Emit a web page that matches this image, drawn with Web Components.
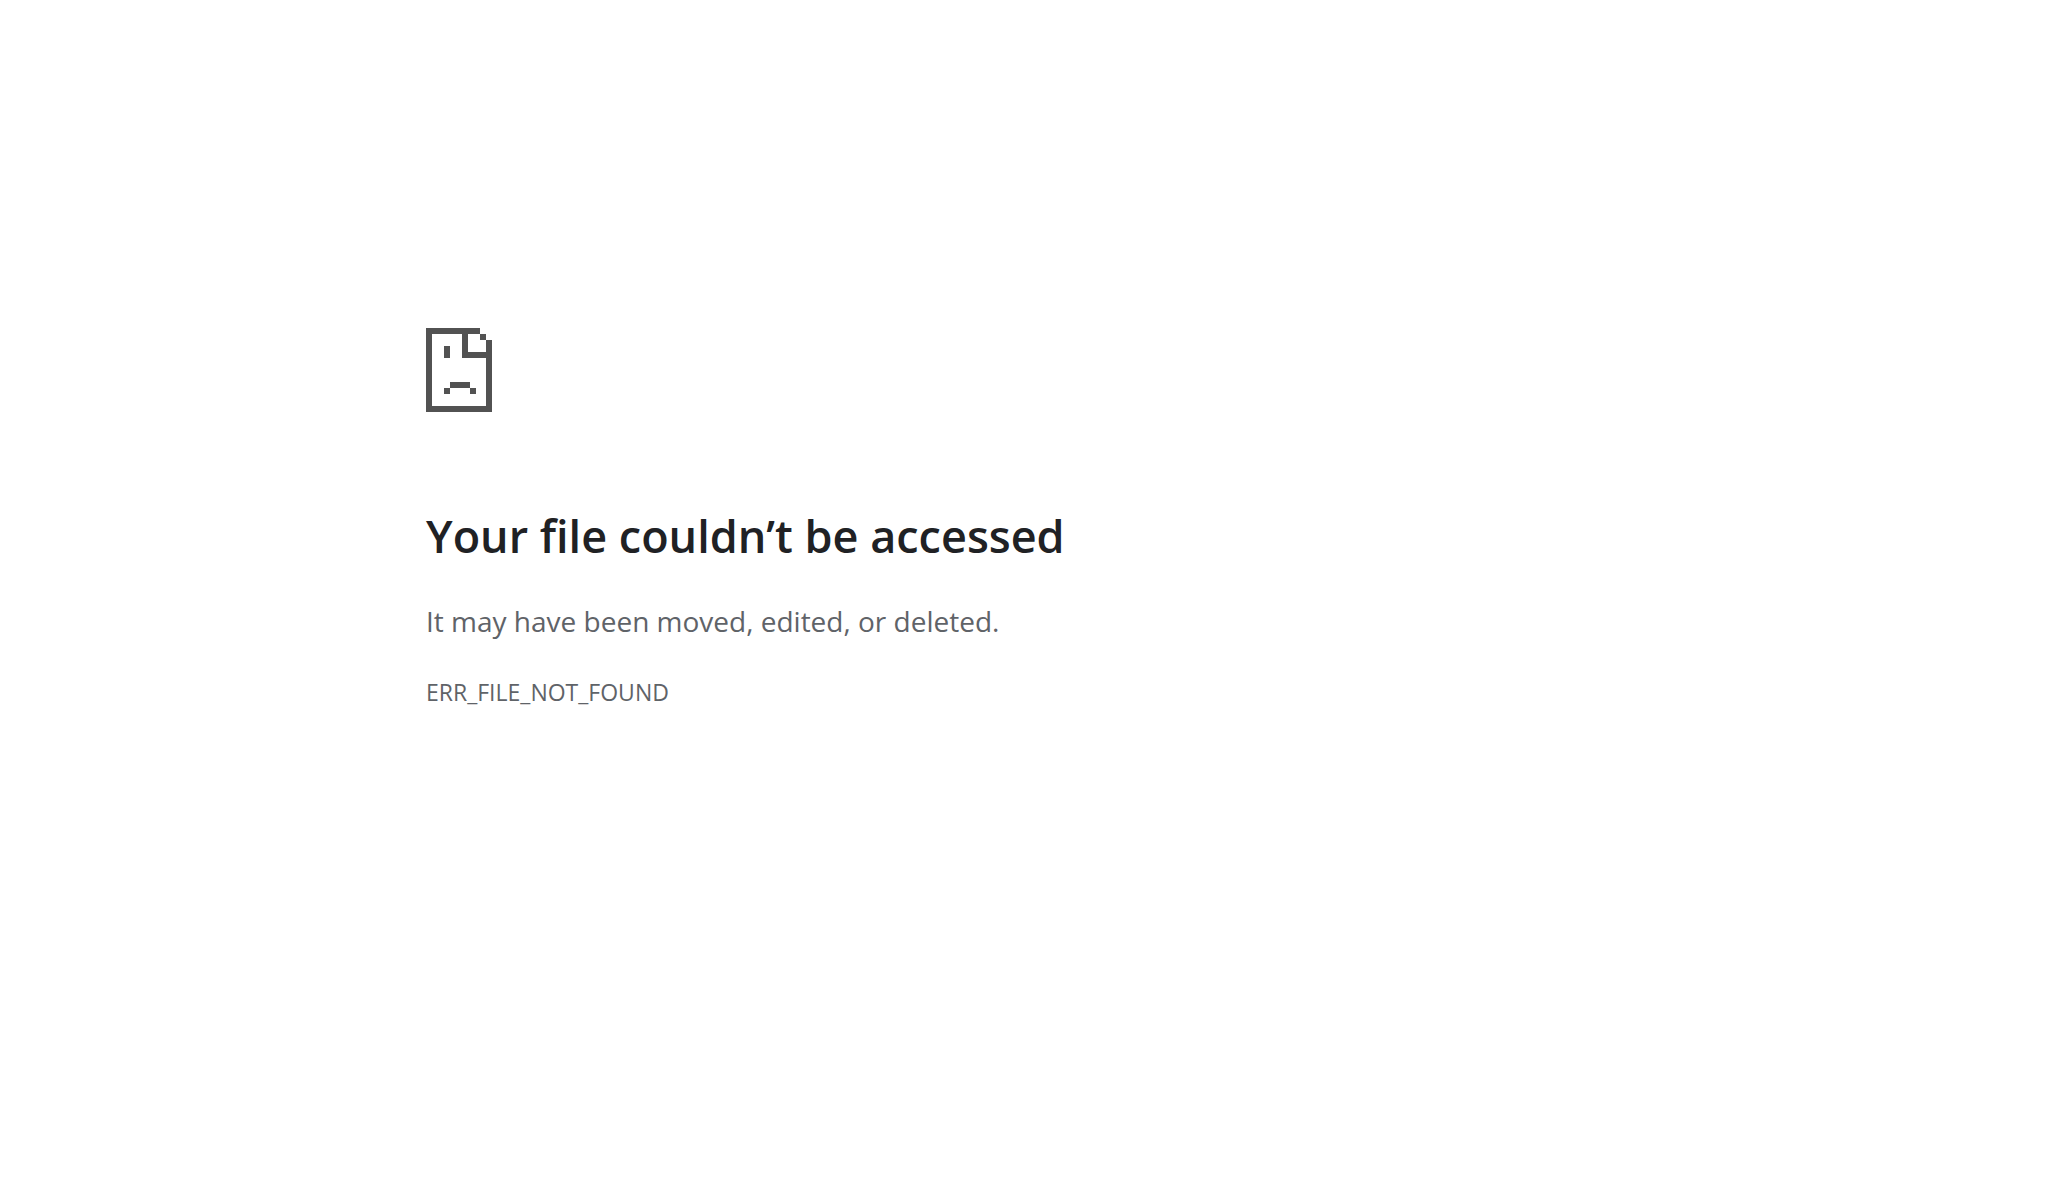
<!DOCTYPE html>
<html lang="en">
<head>
<meta charset="utf-8">
<title>Your file couldn’t be accessed</title>
<style>
body { margin: 0; background: #fff; color: #5f6368; font-family: "Segoe UI", "Open Sans", "Noto Sans", sans-serif; }
</style>
</head>
<body>
<error-page>
  <sad-file-icon slot="icon"></sad-file-icon>
  <span slot="title">Your file couldn’t be accessed</span>
  <span slot="summary">It may have been moved, edited, or deleted.</span>
  <span slot="code">ERR_FILE_NOT_FOUND</span>
</error-page>
<script>
class SadFileIcon extends HTMLElement {
  constructor() {
    super();
    this.attachShadow({ mode: "open" }).innerHTML = `
      <style>
        :host { display: block; color: #525252; }
        svg { display: block; width: 66px; height: 84px; }
      </style>
      <svg viewBox="0 0 66 84" fill="currentColor" shape-rendering="crispEdges" aria-hidden="true">
        <path fill-rule="evenodd" d="M0 0H54V6H42V24H60V12H66V84H0ZM6 6V78H60V30H36V6Z"/>
        <path d="M54 6h6v6h-6zM18 18h6v12h-6zM24 54h20v6H24zM18 60h6v6h-6zM44 60h6v6h-6z"/>
      </svg>`;
  }
}
customElements.define("sad-file-icon", SadFileIcon);

class ErrorPage extends HTMLElement {
  constructor() {
    super();
    this.attachShadow({ mode: "open" }).innerHTML = `
      <style>
        :host { display: block; }
        main { box-sizing: border-box; max-width: 1196px; margin: 0 auto; padding-top: 328px; }
        h1, p { margin: 0; }
        h1 { margin-top: 94px; color: #202124; font-size: 45px; line-height: 60px; font-weight: 600; }
        p { margin-top: 35px; font-size: 28px; line-height: 40px; }
        .code { font-size: 23px; line-height: 32px; }
      </style>
      <main>
        <slot name="icon"></slot>
        <h1><slot name="title"></slot></h1>
        <p><slot name="summary"></slot></p>
        <p class="code"><slot name="code"></slot></p>
      </main>`;
  }
}
customElements.define("error-page", ErrorPage);
</script>
</body>
</html>
